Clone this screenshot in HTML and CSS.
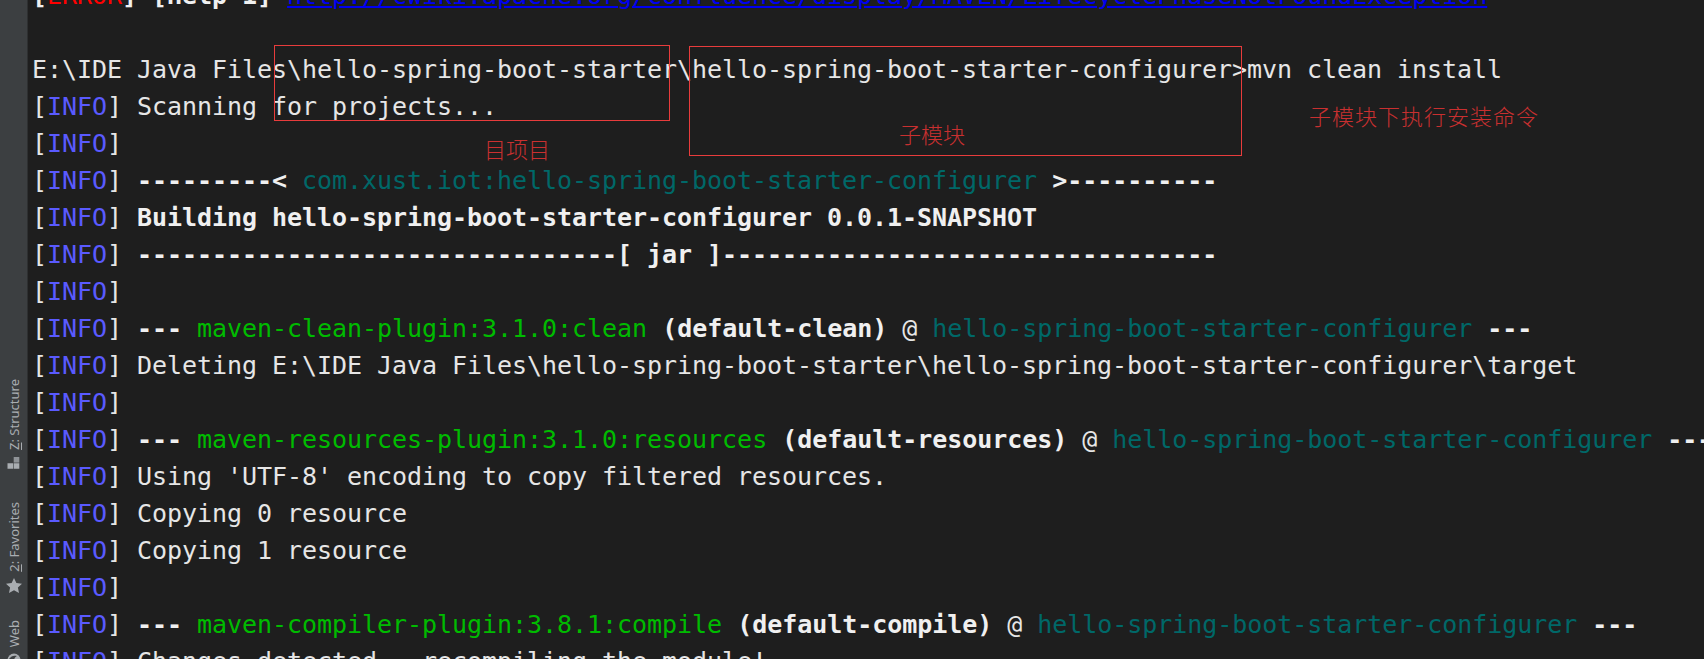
FILE: index.html
```html
<!DOCTYPE html>
<html lang="zh">
<head>
<meta charset="utf-8">
<title>Terminal</title>
<link rel="stylesheet" href="styles.css">
</head>
<body>
<div class="window">
  <aside class="rail">
    <div class="tool tool-structure">
      <span class="tool-label"><u>Z</u>: Structure</span>
      <svg class="tool-icon" width="13" height="12" viewBox="0 0 13 12"><path fill="#8f9397" d="M6.700 0h5.600v5.600H6.700z"/><path fill="#a9adb1" d="M.500 6.200h5.600v5.600H.500zM6.700 6.200h5.600v5.600H6.700z"/></svg>
    </div>
    <div class="tool tool-favorites">
      <span class="tool-label"><u>2</u>: Favorites</span>
      <svg class="tool-icon" width="16" height="15" viewBox="0 0 16 15"><path fill="#a9adb1" d="M8 0l2.400 5 5.600.7-4.100 3.800 1.100 5.500L8 12.300 3 15l1.100-5.500L0 5.700 5.600 5z"/></svg>
    </div>
    <div class="tool tool-web">
      <span class="tool-label">Web</span>
      <svg class="tool-icon" width="14" height="14" viewBox="0 0 14 14"><circle cx="7" cy="7" r="6.500" fill="#a9adb1"/><path fill="#3c3f41" d="M2 6c2-3 5-4 8-3-2 1-3 3-3 5-2-1-3-2-5-2z"/></svg>
    </div>
  </aside>
  <main class="console">
    <div class="line"><span class="b">[</span><span class="err">ERROR</span><span class="b">] [Help 1]</span> <a class="link">http://cwiki.apache.org/confluence/display/MAVEN/LifecyclePhaseNotFoundException</a></div>
    <div class="line"> </div>
    <div class="line">E:\IDE Java Files\hello-spring-boot-starter\hello-spring-boot-starter-configurer&gt;mvn clean install</div>
    <div class="line">[<span class="info">INFO</span>] Scanning for projects...</div>
    <div class="line">[<span class="info">INFO</span>] </div>
    <div class="line">[<span class="info">INFO</span>] <span class="b">---------&lt; </span><span class="teal">com.xust.iot:hello-spring-boot-starter-configurer</span><span class="b"> &gt;----------</span></div>
    <div class="line">[<span class="info">INFO</span>] <span class="b">Building hello-spring-boot-starter-configurer 0.0.1-SNAPSHOT</span></div>
    <div class="line">[<span class="info">INFO</span>] <span class="b">--------------------------------[ jar ]---------------------------------</span></div>
    <div class="line">[<span class="info">INFO</span>] </div>
    <div class="line">[<span class="info">INFO</span>] <span class="b">---</span> <span class="green">maven-clean-plugin:3.1.0:clean</span> <span class="b">(default-clean)</span> @ <span class="teal">hello-spring-boot-starter-configurer</span> <span class="b">---</span></div>
    <div class="line">[<span class="info">INFO</span>] Deleting E:\IDE Java Files\hello-spring-boot-starter\hello-spring-boot-starter-configurer\target</div>
    <div class="line">[<span class="info">INFO</span>] </div>
    <div class="line">[<span class="info">INFO</span>] <span class="b">---</span> <span class="green">maven-resources-plugin:3.1.0:resources</span> <span class="b">(default-resources)</span> @ <span class="teal">hello-spring-boot-starter-configurer</span> <span class="b">---</span></div>
    <div class="line">[<span class="info">INFO</span>] Using 'UTF-8' encoding to copy filtered resources.</div>
    <div class="line">[<span class="info">INFO</span>] Copying 0 resource</div>
    <div class="line">[<span class="info">INFO</span>] Copying 1 resource</div>
    <div class="line">[<span class="info">INFO</span>] </div>
    <div class="line">[<span class="info">INFO</span>] <span class="b">---</span> <span class="green">maven-compiler-plugin:3.8.1:compile</span> <span class="b">(default-compile)</span> @ <span class="teal">hello-spring-boot-starter-configurer</span> <span class="b">---</span></div>
    <div class="line">[<span class="info">INFO</span>] Changes detected - recompiling the module!</div>
  </main>
  <div class="box box-parent"></div>
  <div class="box box-child"></div>
  <span class="note note-parent">目项目</span>
  <span class="note note-child">子模块</span>
  <span class="note note-cmd">子模块下执行安装命令</span>
</div>
</body>
</html>
```
FILE: styles.css
```css
html, body {
  margin: 0;
  height: 100%;
  background: #1e1e1e;
  overflow: hidden;
}
.window {
  position: relative;
  display: flex;
  width: 1704px;
  height: 659px;
  overflow: hidden;
}
.rail {
  box-sizing: border-box;
  flex: 0 0 28px;
  height: 659px;
  background: #3c3f41;
  border-right: 1px solid #2e3031;
  display: flex;
  flex-direction: column;
  align-items: center;
  justify-content: flex-end;
  gap: 27px;
  overflow: hidden;
  font: 13px/16px "Noto Sans", "Open Sans", sans-serif;
  color: #a9adb1;
}
.tool {
  display: flex;
  flex-direction: column;
  align-items: center;
  gap: 6px;
}
.tool-structure {
  gap: 7px;
  margin-bottom: 6px;
}
.tool-web {
  margin-bottom: -8px;
}
.tool-label {
  writing-mode: vertical-rl;
  transform: rotate(180deg);
  white-space: nowrap;
}
.tool-icon {
  display: block;
  flex: none;
}
.console {
  flex: 1;
  margin-top: -23px;
  padding-left: 4px;
  font-family: "DejaVu Sans Mono", monospace;
  font-size: 25px;
  letter-spacing: -0.05px;
  line-height: 37px;
  color: #e6e6e6;
  overflow: hidden;
}
.line {
  height: 37px;
  white-space: pre;
}
.info { color: #5a5aff; }
.err { color: #ff0000; }
.b { font-weight: 700; color: #f0f0f0; }
.teal { color: #006868; }
.green { color: #00bb00; }
.link {
  color: #0000f0;
  text-decoration: underline;
}
.box {
  position: absolute;
  box-sizing: border-box;
  border: 1px solid #e83c3c;
}
.box-parent { left: 274px; top: 45px; width: 396px; height: 76px; }
.box-child { left: 689px; top: 46px; width: 553px; height: 110px; }
.note {
  position: absolute;
  font-family: "Noto Sans CJK SC", sans-serif;
  font-weight: 300;
  font-size: 22px;
  line-height: 26px;
  color: #c93030;
  white-space: nowrap;
}
.note-parent { left: 484px; top: 135px; }
.note-child { left: 899px; top: 120px; }
.note-cmd { left: 1309px; top: 102px; letter-spacing: 1px; }
```
